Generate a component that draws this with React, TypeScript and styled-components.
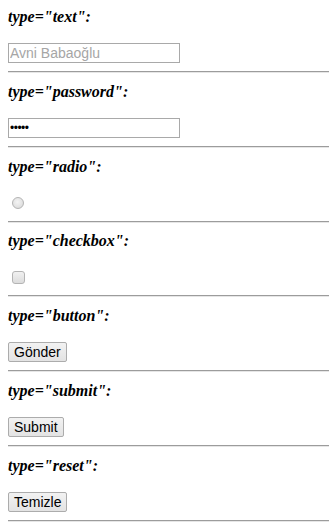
import styled, { createGlobalStyle } from 'styled-components'

const GlobalStyle = createGlobalStyle`
    html, body {
        margin: 0;
        background: #ffffff;
    }
    body {
        padding: 0 0 0 8px;
        font-family: "Liberation Serif", "Times New Roman", serif;
        color: #000;
    }
`

const Page = styled.div`
    display: flex;
    flex-direction: column;
    padding-top: 8px;
`

const Section = styled.section`
    display: flex;
    flex-direction: column;
`

const Heading = styled.div`
    font-family: "Liberation Serif", "Times New Roman", serif;
    font-size: 16px;
    font-weight: bold;
    font-style: italic;
    line-height: 18px;
    height: 18px;
`

const ControlRow = styled.div`
    display: flex;
    align-items: center;
    height: 20px;
    margin-top: 17px;
`

const Rule = styled.div`
    margin-top: 8px;
    margin-bottom: 9.75px;
    height: 0;
    border-top: 1px solid #9c9c9c;
    border-bottom: 1px solid #e6e6e6;
`

const TextField = styled.input`
    box-sizing: border-box;
    width: 172px;
    height: 20px;
    margin: 0;
    padding: 0 1px;
    border: 1px solid #a9a9a9;
    font-family: "Liberation Sans", Arial, sans-serif;
    font-size: 14px;
    color: #000;
    outline: none;
    &::placeholder {
        color: #a6a6a6;
    }
    &[type='password'] {
        font-size: 12px;
        letter-spacing: -0.5px;
    }
`

const Radio = styled.span`
    box-sizing: border-box;
    display: inline-block;
    width: 12px;
    height: 12px;
    margin: 0 0 0 4px;
    border-radius: 50%;
    border: 1px solid #b4b4b4;
    background: radial-gradient(circle at 45% 40%, #f4f4f4 0%, #e2e2e2 60%, #d6d6d6 100%);
`

const Checkbox = styled.span`
    box-sizing: border-box;
    display: inline-block;
    width: 13px;
    height: 13px;
    margin: 0 0 0 4px;
    border-radius: 3px;
    border: 1px solid #b4b4b4;
    background: linear-gradient(#f1f1f1, #dcdcdc);
`

const Button = styled.button`
    box-sizing: border-box;
    height: 20px;
    margin: 0;
    padding: 0 5px;
    border: 1px solid #acacac;
    border-radius: 2px;
    background: linear-gradient(#f2f2f2, #e3e3e3);
    font-family: "Liberation Sans", Arial, sans-serif;
    font-size: 14px;
    line-height: 18px;
    color: #000;
`

const fields = [
    { type: 'text' },
    { type: 'password' },
    { type: 'radio' },
    { type: 'checkbox' },
    { type: 'button', label: 'Gönder' },
    { type: 'submit', label: 'Submit' },
    { type: 'reset', label: 'Temizle' },
]

const Control = ({ type, label }: { type: string; label?: string }) => {
    if (type === 'text') return <TextField type="text" placeholder="Avni Babaoğlu" />
    if (type === 'password') return <TextField type="password" defaultValue="12345" />
    if (type === 'radio') return <Radio />
    if (type === 'checkbox') return <Checkbox />
    return <Button type="button">{label}</Button>
}

export default function App() {
    return (
        <>
            <GlobalStyle />
            <Page>
                {fields.map((f) => (
                    <Section key={f.type}>
                        <Heading>type="{f.type}":</Heading>
                        <ControlRow>
                            <Control type={f.type} label={f.label} />
                        </ControlRow>
                        <Rule />
                    </Section>
                ))}
            </Page>
        </>
    )
}
